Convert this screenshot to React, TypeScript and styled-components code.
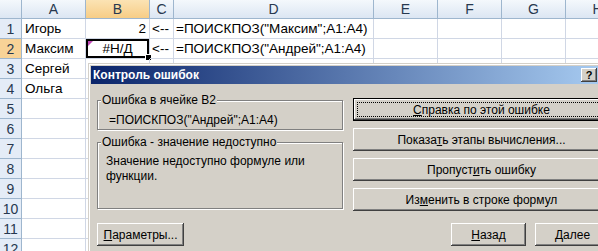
import React from 'react';
import styled, { createGlobalStyle } from 'styled-components';

const GlobalStyle = createGlobalStyle`
  html, body {
    margin: 0;
    padding: 0;
    background: #fff;
    overflow: hidden;
  }
`;

const Screen = styled.div`
  position: relative;
  width: 598px;
  height: 251px;
  overflow: hidden;
  font-family: "Liberation Sans", Arial, sans-serif;
`;

const Sheet = styled.div`
  display: grid;
  grid-template-columns: 22px 64px 64px 24px 200px 64px 64px 64px 64px;
  grid-template-rows: 19px repeat(12, 20px);
`;

const ColHeader = styled.div<{ $selected?: boolean }>`
  box-sizing: border-box;
  border-right: 1px solid #9eb6ce;
  border-bottom: 1px solid #9eb6ce;
  background: ${({ $selected }) =>
    $selected ? 'linear-gradient(#fbe3b4, #f7cd86)' : 'linear-gradient(#f4f8fc, #dce6f3)'};
  color: #27384f;
  font-size: 14px;
  line-height: 18px;
  text-align: center;
`;

const RowHeader = styled.div<{ $selected?: boolean }>`
  box-sizing: border-box;
  border-right: 1px solid #9eb6ce;
  border-bottom: 1px solid #9eb6ce;
  background: ${({ $selected }) => ($selected ? '#f8d397' : '#e4ecf7')};
  color: #27384f;
  font-size: 14px;
  line-height: 20px;
  text-align: center;
`;

const Cell = styled.div<{ $align?: 'left' | 'right' | 'center'; $active?: boolean; $tight?: boolean }>`
  position: relative;
  box-sizing: border-box;
  border-right: 1px solid #d0d7e5;
  border-bottom: 1px solid #d0d7e5;
  padding: 0 3px 0 ${({ $tight }) => ($tight ? 2 : 3)}px;
  font-size: 13.5px;
  line-height: 20px;
  color: #000;
  white-space: nowrap;
  text-align: ${({ $align }) => $align || 'left'};
  ${({ $active }) =>
    $active &&
    `
    box-shadow: inset 0 0 0 2px #000;
    &::before {
      content: '';
      position: absolute;
      left: 2px;
      top: 2px;
      border-top: 5px solid #c04ab8;
      border-right: 5px solid transparent;
    }
    &::after {
      content: '';
      position: absolute;
      right: -3px;
      bottom: -3px;
      width: 5px;
      height: 5px;
      background: #000;
      border: 1px solid #fff;
    }
  `}
`;

const Dialog = styled.div`
  position: absolute;
  left: 88px;
  top: 63px;
  width: 514px;
  height: 200px;
  box-sizing: border-box;
  padding: 2px;
  background: #d4d0c8;
  border: 1px solid;
  border-color: #d4d0c8 #404040 #404040 #d4d0c8;
  box-shadow: inset 1px 1px 0 #fff, inset -1px -1px 0 #808080;
  font-family: "Liberation Sans", Tahoma, sans-serif;
  font-size: 12px;
  color: #000;
`;

const TitleBar = styled.div`
  display: flex;
  align-items: center;
  justify-content: space-between;
  height: 18px;
  padding-left: 2px;
  background: linear-gradient(to right, #0a246a, #a6caf0);
  color: #fff;
  font-weight: bold;
  font-size: 12px;
`;

const HelpButton = styled.div`
  width: 16px;
  height: 14px;
  margin-right: 2px;
  box-sizing: border-box;
  background: #d4d0c8;
  box-shadow: inset -1px -1px 0 #404040, inset 1px 1px 0 #fff, inset -2px -2px 0 #808080;
  color: #000;
  font-size: 11px;
  font-weight: bold;
  line-height: 14px;
  text-align: center;
`;

const Body = styled.div`
  display: flex;
  gap: 10px;
  padding: 9px 0 0 6px;
`;

const LeftCol = styled.div`
  display: flex;
  flex-direction: column;
  width: 246px;
  flex-shrink: 0;
`;

const RightCol = styled.div`
  display: flex;
  flex-direction: column;
  gap: 7px;
  width: 257px;
  flex-shrink: 0;
  padding-top: 5px;
`;

const Group = styled.fieldset<{ $height?: number }>`
  margin: 0 0 5px 0;
  padding: 0;
  border: 1px solid #808080;
  box-shadow: inset 1px 1px 0 #fff, 1px 1px 0 #fff;
  min-inline-size: 0;
  ${({ $height }) => ($height ? `height: ${$height}px;` : '')}
  box-sizing: border-box;
`;

const Legend = styled.legend`
  margin-left: 3px;
  padding: 0 1px;
  line-height: 14px;
  background: #d4d0c8;
`;

const GroupText = styled.div<{ $indent: number; $top: number }>`
  padding: ${({ $top }) => $top}px 4px 1px ${({ $indent }) => $indent}px;
  line-height: 15px;
`;

const Button = styled.div<{ $width?: number; $isDefault?: boolean }>`
  position: relative;
  display: flex;
  align-items: center;
  justify-content: center;
  flex-shrink: 0;
  width: ${({ $width }) => ($width ? `${$width}px` : '100%')};
  height: 23px;
  box-sizing: border-box;
  background: #d4d0c8;
  box-shadow: ${({ $isDefault }) =>
    $isDefault
      ? 'inset 0 0 0 1px #000, inset -2px -2px 0 #404040, inset 2px 2px 0 #fff, inset -3px -3px 0 #808080'
      : 'inset -1px -1px 0 #404040, inset 1px 1px 0 #fff, inset -2px -2px 0 #808080'};
  &::after {
    content: '';
    display: ${({ $isDefault }) => ($isDefault ? 'block' : 'none')};
    position: absolute;
    inset: 4px;
    border: 1px dotted #000;
  }
`;

const NavRow = styled.div`
  display: flex;
  justify-content: flex-end;
  gap: 9px;
  margin-top: 5px;
`;

const ParamsButton = styled(Button)`
  margin-top: 9px;
`;

const columns = ['', 'A', 'B', 'C', 'D', 'E', 'F', 'G', 'H'];

type Row = { a?: string; b?: string; bAlign?: 'left' | 'right' | 'center'; c?: string; d?: string };

const rows: Row[] = [
  { a: 'Игорь', b: '2', bAlign: 'right', c: '<--', d: '=ПОИСКПОЗ("Максим";A1:A4)' },
  { a: 'Максим', b: '#Н/Д', bAlign: 'center', c: '<--', d: '=ПОИСКПОЗ("Андрей";A1:A4)' },
  { a: 'Сергей' },
  { a: 'Ольга' },
  {}, {}, {}, {}, {}, {}, {}, {},
];

const App: React.FC = () => {
  return (
    <Screen>
      <GlobalStyle />
      <Sheet>
        {columns.map((c) => (
          <ColHeader key={c || 'corner'} $selected={c === 'B'}>{c}</ColHeader>
        ))}
        {rows.map((r, i) => (
          <React.Fragment key={i}>
            <RowHeader $selected={i === 1}>{i + 1}</RowHeader>
            <Cell>{r.a}</Cell>
            <Cell $align={r.bAlign} $active={i === 1}>{r.b}</Cell>
            <Cell $tight>{r.c}</Cell>
            <Cell $tight>{r.d}</Cell>
            <Cell />
            <Cell />
            <Cell />
            <Cell />
          </React.Fragment>
        ))}
      </Sheet>

      <Dialog>
        <TitleBar>
          <span>Контроль ошибок</span>
          <HelpButton>?</HelpButton>
        </TitleBar>
        <Body>
          <LeftCol>
            <Group>
              <Legend>Ошибка в ячейке B2</Legend>
              <GroupText $indent={11} $top={6}>=ПОИСКПОЗ("Андрей";A1:A4)</GroupText>
            </Group>
            <Group $height={74}>
              <Legend>Ошибка - значение недоступно</Legend>
              <GroupText $indent={8} $top={5}>
                Значение недоступно формуле или
                <br />
                функции.
              </GroupText>
            </Group>
            <ParamsButton $width={87}>
              <span><u>П</u>араметры...</span>
            </ParamsButton>
          </LeftCol>
          <RightCol>
            <Button $isDefault>
              <span><u>С</u>правка по этой ошибке</span>
            </Button>
            <Button>
              <span>Показа<u>т</u>ь этапы вычисления...</span>
            </Button>
            <Button>
              <span>Пропуст<u>и</u>ть ошибку</span>
            </Button>
            <Button>
              <span>Из<u>м</u>енить в строке формул</span>
            </Button>
            <NavRow>
              <Button $width={75}>
                <span><u>Н</u>азад</span>
              </Button>
              <Button $width={75}>
                <span><u>Д</u>алее</span>
              </Button>
            </NavRow>
          </RightCol>
        </Body>
      </Dialog>
    </Screen>
  );
};

export default App;
